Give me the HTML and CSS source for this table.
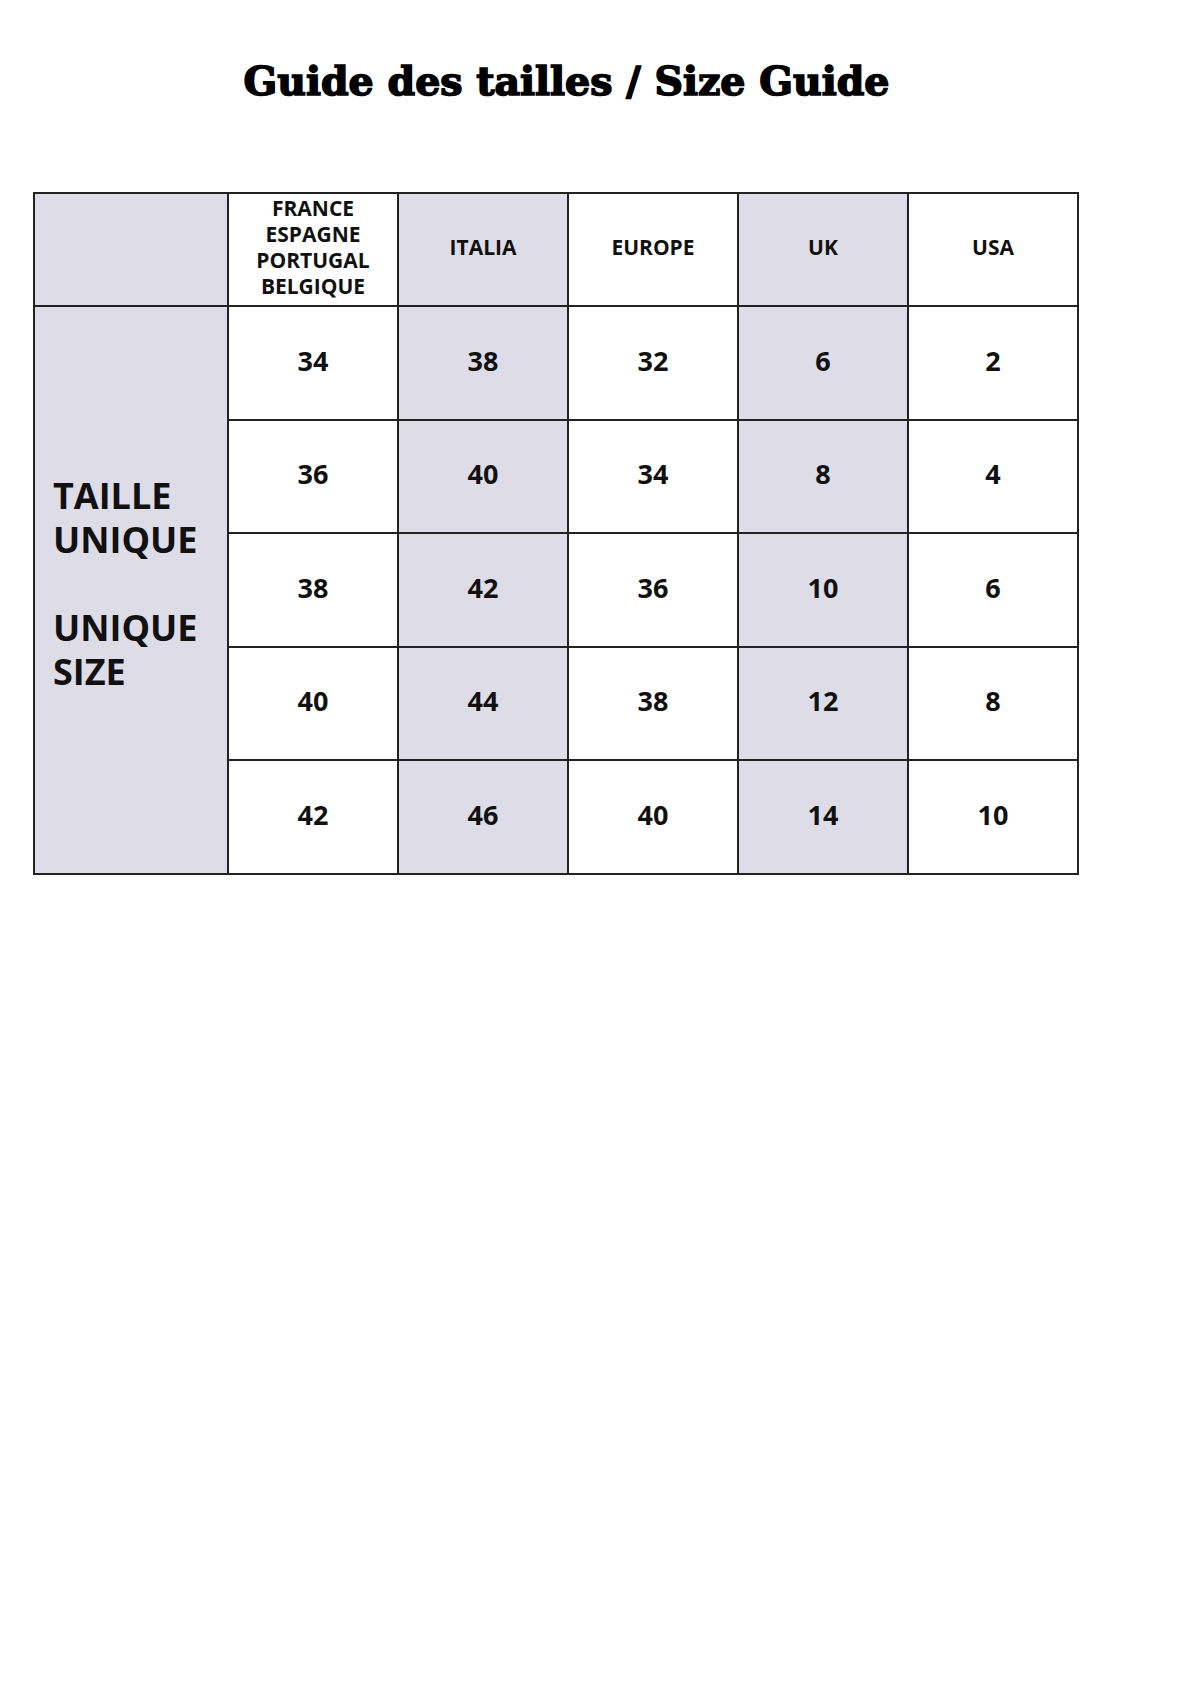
FILE: index.html
```html
<!DOCTYPE html>
<html lang="fr">
<head>
<meta charset="utf-8">
<title>Guide des tailles / Size Guide</title>
<link rel="stylesheet" href="styles.css">
</head>
<body>
<div class="page">
  <h1 class="title">Guide des tailles / Size Guide</h1>
  <table class="sizes">
    <colgroup>
      <col class="c-label">
      <col class="c-data"><col class="c-data"><col class="c-data"><col class="c-data"><col class="c-data">
    </colgroup>
    <thead>
      <tr class="head-row">
        <th class="shade"></th>
        <th>FRANCE<br>ESPAGNE<br>PORTUGAL<br>BELGIQUE</th>
        <th class="shade">ITALIA</th>
        <th>EUROPE</th>
        <th class="shade">UK</th>
        <th>USA</th>
      </tr>
    </thead>
    <tbody>
      <tr>
        <td class="shade label" rowspan="5">TAILLE<br>UNIQUE<br><br>UNIQUE<br>SIZE</td>
        <td>34</td><td class="shade">38</td><td>32</td><td class="shade">6</td><td>2</td>
      </tr>
      <tr><td>36</td><td class="shade">40</td><td>34</td><td class="shade">8</td><td>4</td></tr>
      <tr><td>38</td><td class="shade">42</td><td>36</td><td class="shade">10</td><td>6</td></tr>
      <tr><td>40</td><td class="shade">44</td><td>38</td><td class="shade">12</td><td>8</td></tr>
      <tr><td>42</td><td class="shade">46</td><td>40</td><td class="shade">14</td><td>10</td></tr>
    </tbody>
  </table>
</div>
</body>
</html>
```
FILE: styles.css
```css
html, body {
  margin: 0;
  padding: 0;
  background: #ffffff;
}

.page {
  padding: 57px 0 0 33px;
}

.title {
  margin: 0;
  width: 1067px;
  text-align: center;
  font-family: "DejaVu Serif", "Liberation Serif", serif;
  font-weight: bold;
  font-size: 39.5px;
  line-height: 48px;
  letter-spacing: 0;
  -webkit-text-stroke: 1.6px #000;
  color: #000;
}

.sizes {
  margin-top: 87px;
  border-collapse: collapse;
  table-layout: fixed;
  width: 1045px;
  font-family: "Open Sans", "Liberation Sans", sans-serif;
  font-weight: bold;
  color: #111;
}

.c-label { width: 194px; }
.c-data { width: 170px; }

.sizes th,
.sizes td {
  border: 2px solid #222;
  padding: 0 0 5px 0;
  text-align: center;
  vertical-align: middle;
  background: #ffffff;
}

.sizes .shade {
  background: #dddce7;
}

.sizes th {
  font-size: 21px;
  line-height: 26px;
  font-weight: bold;
  padding-bottom: 6px;
}

.head-row {
  height: 113px;
}

.sizes tbody tr {
  height: 113.5px;
}

.sizes td {
  font-size: 27px;
}

.sizes td.label {
  text-align: left;
  padding: 0 0 12px 18px;
  font-size: 36px;
  line-height: 44px;
}
```
